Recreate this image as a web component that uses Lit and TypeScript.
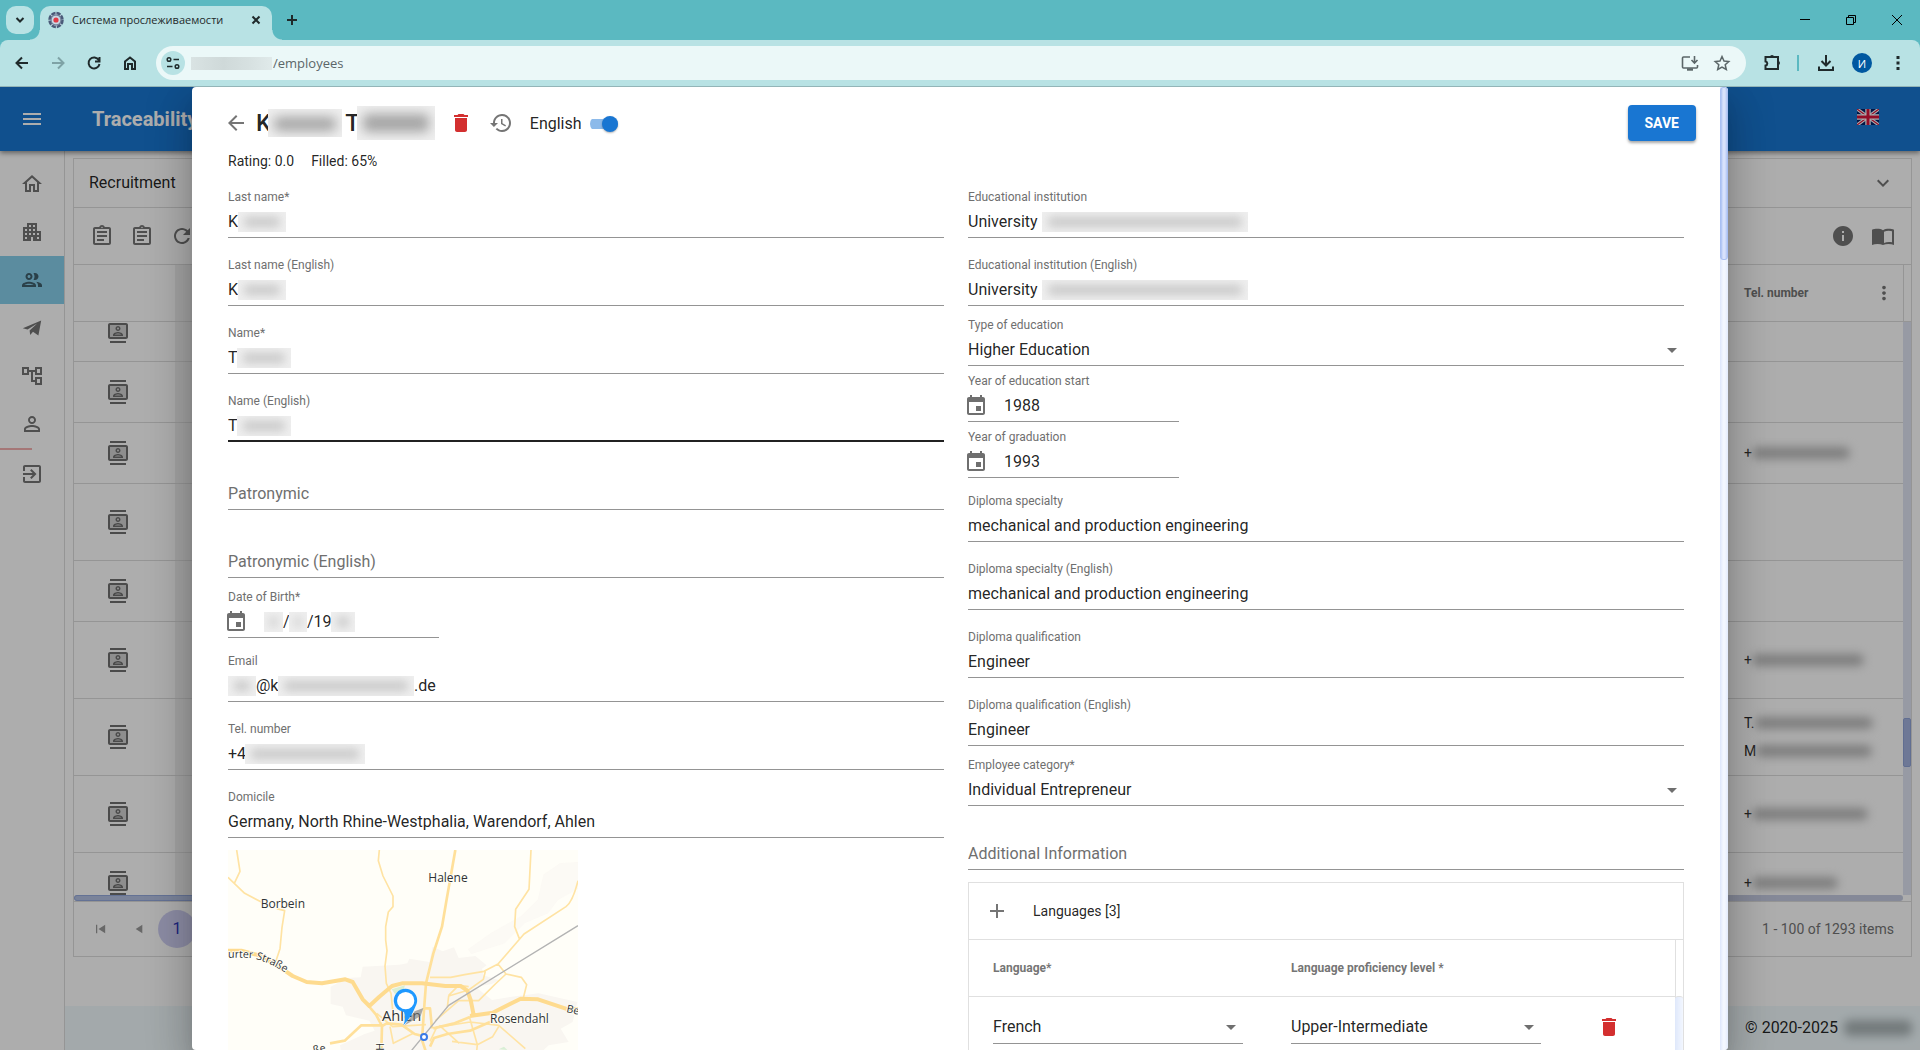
import { LitElement, html, css, svg, nothing } from "lit";
import { customElement, property } from "lit/decorators.js";

const ICONS: Record<string, string> = {
  home: "M12 5.69l5 4.5V18h-2v-6H9v6H7v-7.81l5-4.5M12 3L2 12h3v8h6v-6h2v6h6v-8h3L12 3z",
  apartment:
    "M17 11V3H7v4H3v14h8v-4h2v4h8V11h-4zM7 19H5v-2h2v2zm0-4H5v-2h2v2zm0-4H5V9h2v2zm4 4H9v-2h2v2zm0-4H9V9h2v2zm0-4H9V5h2v2zm4 8h-2v-2h2v2zm0-4h-2V9h2v2zm0-4h-2V5h2v2zm4 12h-2v-2h2v2zm0-4h-2v-2h2v2z",
  group:
    "M9 13.75c-2.34 0-7 1.17-7 3.5V19h14v-1.75c0-2.33-4.66-3.5-7-3.5zM4.34 17c.84-.58 2.87-1.25 4.66-1.25s3.82.67 4.66 1.25H4.34zM9 12c1.93 0 3.5-1.57 3.5-3.5S10.93 5 9 5 5.5 6.57 5.5 8.5 7.07 12 9 12zm0-5c.83 0 1.5.67 1.5 1.5S9.83 10 9 10s-1.5-.67-1.5-1.5S8.17 7 9 7zm7.04 6.81c1.16.84 1.96 1.96 1.96 3.44V19h4v-1.75c0-2.02-3.5-3.17-5.96-3.44zM15 12c1.93 0 3.5-1.57 3.5-3.5S16.93 5 15 5c-.54 0-1.04.13-1.5.35.63.89 1 1.98 1 3.15s-.37 2.26-1 3.15c.46.22.96.35 1.5.35z",
  plane: "M2.8 12.2L21.2 4.4 18.4 19.6 13 15.8 10.2 18.9 9.6 14.6 17.2 7.6 7.6 13.6z",
  tree: "M22 11V3h-7v3H9V3H2v8h7V8h2v10h4v3h7v-8h-7v3h-2V8h2v3h7zM7 9H4V5h3v4zm10 6h3v4h-3v-4zm0-10h3v4h-3V5z",
  person:
    "M12 5.9c1.16 0 2.1.94 2.1 2.1s-.94 2.1-2.1 2.1S9.9 9.16 9.9 8s.94-2.1 2.1-2.1m0 9c2.97 0 6.1 1.46 6.1 2.1v1.1H5.9V17c0-.64 3.13-2.1 6.1-2.1M12 4C9.79 4 8 5.79 8 8s1.79 4 4 4 4-1.79 4-4-1.79-4-4-4zm0 9c-2.67 0-8 1.34-8 4v3h16v-3c0-2.66-5.33-4-8-4z",
  exit: "M10.09 15.59L11.5 17l5-5-5-5-1.41 1.41L12.67 11H3v2h9.67l-2.58 2.59zM19 3H5c-1.11 0-2 .9-2 2v4h2V5h14v14H5v-4H3v4c0 1.1.89 2 2 2h14c1.1 0 2-.9 2-2V5c0-1.1-.9-2-2-2z",
  assignment:
    "M7 15h7v2H7zm0-4h10v2H7zm0-4h10v2H7zM19 3h-4.18C14.4 1.84 13.3 1 12 1s-2.4.84-2.82 2H5c-1.1 0-2 .9-2 2v14c0 1.1.9 2 2 2h14c1.1 0 2-.9 2-2V5c0-1.1-.9-2-2-2zm-7-.25c.41 0 .75.34.75.75s-.34.75-.75.75-.75-.34-.75-.75.34-.75.75-.75zM19 19H5V5h14v14z",
  refresh:
    "M17.65 6.35C16.2 4.9 14.21 4 12 4c-4.42 0-7.99 3.58-7.99 8s3.57 8 7.99 8c3.73 0 6.84-2.55 7.73-6h-2.08c-.82 2.33-3.04 4-5.65 4-3.31 0-6-2.69-6-6s2.69-6 6-6c1.66 0 3.14.69 4.22 1.78L13 11h7V4l-2.35 2.35z",
  contacts:
    "M20 4H4c-1.1 0-2 .9-2 2v12c0 1.1.9 2 2 2h16c1.1 0 2-.9 2-2V6c0-1.1-.9-2-2-2zm0 14H4V6h16v12zM4 0h16v2H4zm0 22h16v2H4zm8-10c1.38 0 2.5-1.12 2.5-2.5S13.38 7 12 7 9.5 8.12 9.5 9.5 10.62 12 12 12zm0-3.5c.55 0 1 .45 1 1s-.45 1-1 1-1-.45-1-1 .45-1 1-1zm5 7.49C17 13.9 13.69 13 12 13s-5 .9-5 2.99V17h10v-1.01zm-8.19-.49c.61-.52 2.03-1 3.19-1 1.17 0 2.59.48 3.2 1H8.81z",
  info: "M12 2C6.48 2 2 6.48 2 12s4.48 10 10 10 10-4.48 10-10S17.52 2 12 2zm1 15h-2v-6h2v6zm0-8h-2V7h2v2z",
  book: "M1 5.8C3.8 4.6 9 4.300 12 6.200C15 4.300 20.200 4.600 23 5.800V21C19.800 19.600 15.200 19.500 12 21C8.800 19.500 4.200 19.600 1 21zM21 18.300V7.200C18.500 6.300 15.500 6.600 13 7.700V18.900C15.500 17.900 18.500 17.700 21 18.300z",
  del: "M6 19c0 1.1.9 2 2 2h8c1.1 0 2-.9 2-2V7H6v12zM19 4h-3.5l-1-1h-5l-1 1H5v2h14V4z",
  history:
    "M13 3c-4.97 0-9 4.03-9 9H1l3.89 3.89.07.14L9 12H6c0-3.87 3.13-7 7-7s7 3.13 7 7-3.13 7-7 7c-1.93 0-3.68-.79-4.94-2.06l-1.42 1.42C8.27 19.99 10.51 21 13 21c4.97 0 9-4.03 9-9s-4.03-9-9-9zm-1 5v5l4.28 2.54.72-1.21-3.5-2.08V8H12z",
  event:
    "M17 12h-5v5h5v-5zM16 1v2H8V1H6v2H5c-1.11 0-1.99.9-1.99 2L3 19c0 1.1.89 2 2 2h14c1.1 0 2-.9 2-2V5c0-1.1-.9-2-2-2h-1V1h-2zm3 18H5V8h14v11z",
  back: "M20 11H7.83l5.59-5.59L12 4l-8 8 8 8 1.41-1.41L7.83 13H20v-2z",
  add: "M19 13h-6v6h-2v-6H5v-2h6V5h2v6h6v2z",
  menu: "M3 18h18v-2H3v2zm0-5h18v-2H3v2zm0-7v2h18V6H3z",
  expand: "M16.59 8.59L12 13.170 7.410 8.590 6 10l6 6 6-6z",
  more: "M12 8c1.1 0 2-.9 2-2s-.9-2-2-2-2 .9-2 2 .9 2 2 2zm0 2c-1.1 0-2 .9-2 2s.9 2 2 2 2-.9 2-2-.9-2-2-2zm0 6c-1.1 0-2 .9-2 2s.9 2 2 2 2-.9 2-2-.9-2-2-2z",
  caret: "M7 10l5 5 5-5z",
  first: "M6 7h1.500v10H6zM17 7v10L9 12z",
  prev: "M16 7v10L8 12z",
};

const icon = (name: string, size = 24) => html`
  <svg width=${size} height=${size} viewBox="0 0 24 24" fill="currentColor" fill-rule="evenodd" aria-hidden="true">
    <path d=${ICONS[name]}></path>
  </svg>`;

const stroke = (body: unknown, size = 20) => html`
  <svg width=${size} height=${size} viewBox="0 0 20 20" fill="none" stroke="currentColor" stroke-width="2" aria-hidden="true">
    ${body}
  </svg>`;

const base = css`
  *, *::before, *::after { box-sizing: border-box; }
  button, input, select { font: inherit; color: inherit; margin: 0; }
  button { border: 0; background: none; padding: 0; cursor: pointer; display: flex; align-items: center; justify-content: center; }
  svg { display: block; flex: none; }
`;

const smudgeStyles = css`
  .smudge {
    display: block;
    flex: none;
    align-self: center;
    height: 20px;
    overflow: hidden;
    background: #efefef;
  }
  .smudge::before {
    content: "";
    display: block;
    height: 10px;
    margin: 5px 6px;
    border-radius: 4px;
    background: #c8c8c8;
    filter: blur(5px);
  }
`;

/* ---------- Browser frame ---------- */

@customElement("browser-frame")
export class BrowserFrame extends LitElement {
  static styles = [base, css`
    :host { display: block; flex: none; font-family: "Open Sans", "Noto Sans", sans-serif; color: #1f2a2b; background: #5bb9c1; }
    .strip { display: flex; align-items: flex-end; height: 40px; padding-left: 6px; }
    .search { width: 28px; height: 28px; border-radius: 10px; background: #b8e2e4; margin: 0 6px 6px 0; }
    .tab { position: relative; display: flex; align-items: center; width: 232px; height: 34px; padding: 0 6px 6px 8px; border-radius: 10px 10px 0 0; background: #b8e2e4; }
    .tab::before, .tab::after { content: ""; position: absolute; bottom: 0; width: 10px; height: 10px; }
    .tab::before { left: -10px; background: radial-gradient(circle at 0 0, transparent 9px, #b8e2e4 10px); }
    .tab::after { right: -10px; background: radial-gradient(circle at 100% 0, transparent 9px, #b8e2e4 10px); }
    .title { flex: 1; margin-left: 8px; font-size: 11px; line-height: 16px; white-space: nowrap; }
    .close { width: 20px; height: 20px; }
    .plus { width: 28px; height: 28px; margin: 0 auto 6px 6px; }
    .window { display: flex; height: 40px; color: #000; }
    .window button { width: 46px; }
    .bar { display: flex; align-items: center; height: 47px; padding: 0 8px; background: #b8e2e4; border-radius: 8px 8px 0 0; border-bottom: 1px solid #93b5b8; }
    .nav { width: 28px; height: 28px; margin-right: 8px; }
    .dim { color: #7fa3a6; }
    .omni { flex: 1; display: flex; align-items: center; height: 34px; margin: 0 4px; padding: 0 12px 0 5px; border-radius: 17px; background: #ebf8f8; color: #5b6668; }
    .site { width: 24px; height: 24px; border-radius: 12px; background: #b8e2e4; color: #1f2a2b; margin-right: 6px; }
    .host { width: 81px; height: 13px; background: linear-gradient(90deg, #d9e3e3, #cfd9d9 40%, #d6e0e0 70%, #e0eaea); }
    .url { flex: 1; min-width: 0; border: 0; padding: 0 0 0 1px; background: none; font-size: 13px; line-height: 20px; outline: none; }
    .omni .act { width: 24px; height: 24px; margin-left: 8px; }
    .tool { width: 28px; height: 28px; margin-left: 8px; }
    .sep { width: 2px; height: 16px; margin: 0 -1px 0 11px; background: #5bb9c1; }
    .tool.dl { margin-left: 14px; }
    .avatar { width: 20px; height: 20px; border-radius: 10px; background: #0058a0; color: #fff; font-size: 11px; margin: 0 4px 0 12px; }
  `];

  render() {
    return html`
      <div class="strip">
        <button class="search" aria-label="Search tabs">${stroke(svg`<path d="M6.500 8l3.500 3.500L13.500 8"></path>`)}</button>
        <div class="tab">
          <svg width="16" height="18" viewBox="0 0 16 18" aria-hidden="true">
            <ellipse cx="8" cy="9" rx="6.500" ry="7" fill="#c9d8e4" stroke="#4a5a78" stroke-width="2.500" stroke-dasharray="4.300 1"></ellipse>
            <circle cx="8" cy="9" r="5" fill="none" stroke="#5a6a86"></circle>
            <circle cx="8" cy="9" r="2.600" fill="#e03a46"></circle>
          </svg>
          <span class="title">Система прослеживаемости</span>
          <button class="close" aria-label="Close tab">${stroke(svg`<path d="M6.500 6.500l7 7M13.500 6.500l-7 7"></path>`)}</button>
        </div>
        <button class="plus" aria-label="New tab">${stroke(svg`<path d="M10 5v10M5 10h10"></path>`)}</button>
        <div class="window">
          <button aria-label="Minimize">${stroke(svg`<path stroke-width="1" d="M5 9.500h10"></path>`)}</button>
          <button aria-label="Restore">${stroke(svg`<path stroke-width="1" d="M5.500 7.500h7v7h-7zM7.500 7.500v-2h7v7h-2"></path>`)}</button>
          <button aria-label="Close">${stroke(svg`<path stroke-width="1" d="M5 5l10 10M15 5L5 15"></path>`)}</button>
        </div>
      </div>
      <div class="bar">
        <button class="nav" aria-label="Back">${stroke(svg`<path d="M16 10H5M10 4.500L4.500 10l5.500 5.500"></path>`)}</button>
        <button class="nav dim" aria-label="Forward">${stroke(svg`<path d="M4 10h11M10 4.500l5.500 5.500-5.500 5.500"></path>`)}</button>
        <button class="nav" aria-label="Reload">${stroke(svg`<path d="M14.800 7A5.500 5.500 0 1 0 15.500 11M15.500 4v4.500H11"></path>`)}</button>
        <button class="nav" aria-label="Home">${stroke(svg`<path d="M5 16V8.500L10 4.500l5 4V16h-3v-5H8v5z"></path>`)}</button>
        <div class="omni">
          <button class="site" aria-label="Site information">${stroke(svg`<path stroke-width="1.500" d="M10.500 6.500H16M4 13.500h5.500"></path><circle stroke-width="1.500" cx="6" cy="6.500" r="1.800"></circle><circle stroke-width="1.500" cx="14" cy="13.500" r="1.800"></circle>`)}</button>
          <span class="host"></span>
          <input class="url" aria-label="Address" value="/employees">
          <button class="act" aria-label="Install">${stroke(svg`<path stroke-width="1.600" d="M10 4H3.500a1 1 0 0 0-1 1v9a1 1 0 0 0 1 1h13a1 1 0 0 0 1-1v-2M14.500 3v6.500M11.500 7l3 3 3-3"></path><path stroke-width="2.400" d="M7 16.500h6"></path>`)}</button>
          <button class="act" aria-label="Bookmark">${stroke(svg`<path stroke-width="1.500" d="M10 3.500l2 4.500 4.800.5-3.600 3.200 1.100 4.800L10 14l-4.300 2.500 1.100-4.800L3.200 8.500 8 8z"></path>`)}</button>
        </div>
        <button class="tool" aria-label="Extensions">${stroke(svg`<path d="M3.500 4H16v12H3.500v-3.500c2.400-.4 2.400-3.600 0-4z"></path><path stroke="none" fill="currentColor" d="M8 4a2 2 0 0 1 4 0zM16 8a2 2 0 0 1 0 4z"></path>`)}</button>
        <span class="sep"></span>
        <button class="tool dl" aria-label="Downloads">${stroke(svg`<path d="M10 2v10M5.500 8l4.500 4.500L14.500 8M3 13.500V17h14v-3.500"></path>`)}</button>
        <button class="avatar" aria-label="Profile">И</button>
        <button class="tool" aria-label="Menu">${stroke(svg`<path stroke-width="3" d="M10 3v3M10 8.500v3M10 14v3"></path>`)}</button>
      </div>`;
  }
}

/* ---------- Page behind the dialog ---------- */

interface GridRow { tall?: boolean; tel: [string, number][]; }

const ROWS: GridRow[] = [
  { tel: [] },
  { tel: [] },
  { tel: [["+", 98]] },
  { tall: true, tel: [] },
  { tel: [] },
  { tall: true, tel: [["+", 112]] },
  { tall: true, tel: [["T.", 118], ["M", 116]] },
  { tall: true, tel: [["+", 116]] },
  { tel: [["+", 86]] },
];

const MENU: [string, string][] = [
  ["home", "Home"], ["apartment", "Companies"], ["group", "Employees"], ["plane", "Messages"],
  ["tree", "Structure"], ["person", "Profile"], ["exit", "Log out"],
];

@customElement("employees-page")
export class EmployeesPage extends LitElement {
  static styles = [base, css`
    :host { display: flex; flex-direction: column; height: 100%; background: #fff; font-family: Roboto, sans-serif; color: rgba(0, 0, 0, .87); }
    .top { flex: none; display: flex; align-items: center; height: 64px; padding: 0 36px 0 16px; background: #1976d2; color: #fff; box-shadow: 0 2px 5px rgba(0, 0, 0, .45); z-index: 1; }
    .top button { width: 32px; height: 40px; }
    .brand { flex: 1; margin: 0 0 0 44px; font-size: 20px; line-height: 32px; font-weight: 700; }
    .lang { padding-bottom: 4px; }
    .body { flex: 1; display: flex; min-height: 0; }
    .side { flex: none; width: 65px; padding-top: 9px; border-right: 1px solid #dcdcdc; color: #757575; }
    .side a { display: flex; align-items: center; justify-content: center; height: 48px; color: inherit; }
    .side a.on { background: #87ceeb; color: #3f5f6c; }
    .mark { display: block; width: 32px; height: 2px; background: #f4b0b0; }
    .main { flex: 1; min-width: 0; display: flex; flex-direction: column; }
    .content { flex: 1; min-height: 0; display: flex; flex-direction: column; padding: 7px 8px 49px; }
    .panel { display: flex; align-items: center; justify-content: space-between; height: 49px; padding: 0 16px 0 15px; border: solid #dedede; border-width: 1px 1px 0; font-size: 16px; line-height: 24px; }
    .panel svg, .tools, .pager { color: #757575; }
    .grid { flex: 1; min-height: 0; display: flex; flex-direction: column; border: 1px solid #dcdcdc; }
    .tools { display: flex; align-items: center; height: 57px; padding: 0 8px; border-bottom: 1px solid #dcdcdc; }
    .tools button { width: 40px; height: 40px; }
    .fill { flex: 1; }
    .scroll { flex: 1; min-height: 0; display: flex; flex-direction: column; overflow: hidden; }
    table { width: 100%; border-collapse: separate; border-spacing: 0; table-layout: fixed; }
    .c1 { width: 101px; }
    .c3 { width: 183px; }
    .gut { width: 8px; }
    td, th { padding: 0; border-bottom: 1px solid #dcdcdc; height: 61px; font-size: 14px; line-height: 28px; text-align: left; font-weight: 400; }
    th { height: 57px; font-size: 12px; font-weight: 700; color: #757575; }
    th.gut { border-left: 1px solid #dcdcdc; }
    .tall td { height: 77px; }
    td:first-child svg { margin-left: 32px; color: #6f6f6f; background: linear-gradient(#d2d2d2, #d2d2d2) center / 18px 14px no-repeat; }
    .c2 { background: #f0f0f0; }
    .tel { padding-left: 24px; }
    .head { display: flex; align-items: center; justify-content: space-between; padding-right: 8px; }
    .line { display: flex; align-items: center; }
    .blot { height: 12px; background: #bababa; filter: blur(5px); border-radius: 6px; }
    .rows { flex: 1; min-height: 0; display: flex; overflow: hidden; }
    .rows table { flex: 1; width: auto; margin-top: -21px; align-self: flex-start; }
    .vbar { width: 8px; flex: none; display: flex; flex-direction: column; background: #dfe3f2; }
    .vbar i { margin-top: 396px; height: 49px; border-radius: 2px; background: #a3b2de; border: 1px solid #8fa3d6; }
    .hbar { flex: none; display: flex; height: 6px; margin-right: 8px; background: #c4cbe0; border-radius: 3px; }
    .hbar i { width: 40%; background: #b4c2e4; border: 1px solid #94a8dc; border-radius: 3px; }
    .pager { flex: none; display: flex; align-items: center; height: 55px; padding: 0 17px 0 8px; border-top: 1px solid #dcdcdc; font-size: 14px; line-height: 20px; }
    .pager button { width: 38px; height: 38px; color: #9a9a9a; }
    .pager .cur { border-radius: 19px; background: #cfcff2; color: #2c35b8; font-size: 16px; }
    .foot { flex: none; display: flex; align-items: center; justify-content: flex-end; height: 44px; padding: 0 8px; background: #f0fafd; font-size: 16px; line-height: 24px; gap: 6px; }
    .foot .blot { width: 68px; height: 16px; background: #aab4b6; }
  `];

  render() {
    return html`
      <header class="top">
        <button aria-label="Menu">${icon("menu")}</button>
        <h1 class="brand">Traceability</h1>
        <button class="lang" aria-label="English">
          <svg width="22" height="16" viewBox="0 0 22 16" aria-hidden="true">
            <rect width="22" height="16" fill="#012169"></rect>
            <path d="M0 0l22 16M22 0L0 16" stroke="#fff" stroke-width="3.400"></path>
            <path d="M0 0l22 16M22 0L0 16" stroke="#d8143a" stroke-width="1.200"></path>
            <path d="M11 0v16M0 8h22" stroke="#fff" stroke-width="5.400"></path>
            <path d="M11 0v16M0 8h22" stroke="#d8143a" stroke-width="3"></path>
          </svg>
        </button>
      </header>
      <div class="body">
        <nav class="side">
          ${MENU.map(([name, label]) => html`
            ${name === "exit" ? html`<i class="mark"></i>` : nothing}
            <a href="#" class=${name === "group" ? "on" : ""} aria-label=${label}>${icon(name)}</a>`)}
        </nav>
        <div class="main">
          <div class="content">
            <div class="panel"><span>Recruitment</span>${icon("expand")}</div>
            <div class="grid">
              <div class="tools">
                <button aria-label="Report">${icon("assignment")}</button>
                <button aria-label="Form">${icon("assignment")}</button>
                <button aria-label="Refresh">${icon("refresh")}</button>
                <span class="fill"></span>
                <button aria-label="Information">${icon("info")}</button>
                <button aria-label="Manual">${icon("book")}</button>
              </div>
              <div class="scroll">
                <table>
                  <thead><tr>
                    <th class="c1"></th><th class="c2"></th>
                    <th class="c3"><div class="tel head">Tel. number ${icon("more", 22)}</div></th>
                    <th class="gut"></th>
                  </tr></thead>
                </table>
                <div class="rows">
                  <table>
                    <colgroup><col class="c1"><col><col class="c3"></colgroup>
                    <tbody>
                      ${ROWS.map((r) => html`
                        <tr class=${r.tall ? "tall" : ""}>
                          <td>${icon("contacts")}</td>
                          <td class="c2"></td>
                          <td><div class="tel">${r.tel.map(([t, w]) => html`
                            <div class="line">${t}<span class="blot" style="width:${w}px"></span></div>`)}</div></td>
                        </tr>`)}
                    </tbody>
                  </table>
                  <div class="vbar"><i></i></div>
                </div>
                <div class="hbar"><i></i></div>
              </div>
              <div class="pager">
                <button aria-label="First page">${icon("first", 20)}</button>
                <button aria-label="Previous page">${icon("prev", 20)}</button>
                <button class="cur">1</button>
                <span class="fill"></span>
                <span>1 - 100 of 1293 items</span>
              </div>
            </div>
          </div>
          <footer class="foot"><span>© 2020-2025</span><span class="blot"></span></footer>
        </div>
      </div>`;
  }
}

/* ---------- Map ---------- */

@customElement("place-map")
export class PlaceMap extends LitElement {
  static styles = [base, css`
    :host { display: block; width: 350px; height: 300px; background: #fffef6; overflow: hidden; }
    text { font-family: "Open Sans", "Noto Sans", sans-serif; fill: #2f3337; stroke: #fffef6; stroke-width: 5; paint-order: stroke; }
    .town { font-size: 36px; }
    .city { font-size: 44px; }
    .road { font-size: 32px; }
    .minor { fill: none; stroke: #ffe3a3; stroke-width: 5; stroke-linejoin: round; }
    .mid { fill: none; stroke: #ffe09a; stroke-width: 8; stroke-linejoin: round; }
    .major { fill: none; stroke: #fedb8f; stroke-width: 12; stroke-linejoin: round; }
    .rail { fill: none; stroke: #b3b3b3; stroke-width: 4; }
  `];

  render() {
    return html`
      <svg width="350" height="300" viewBox="54 60 1050 900" role="img" aria-label="Map of Ahlen">
        <rect x="54" y="60" width="1050" height="900" fill="#fffef8"></rect>
        <g fill="#f9f6f1">
          <path d="M362 470l50-26 40-2 6-32 110-6 24-4 6-14 60 10 10-46 30 14 34-12 14 32 50-6 34 28-14 10 4 20 46 14-20 12-50 8 50 40 60-10 80-10 116 26-14 60-36 20 24 40-60 10-30 28 20 82H460l-60-40-10-70 74-34 30-10-16-30-70-16-10-26-36-8z"></path>
          <path d="M1000 134l50-34 54-4v80l-60 34-30 40-70 30-60 60-100 32-10-14 70-50 90-50 50-50z" opacity=".5"></path>
        </g>
        <path d="M545 478l40-12-6 20-24 6zM866 658l16-8 10 10z" fill="#d9efd5"></path>
        <path class="minor" d="M80 60l10 64-16 34M54 142l50 48 50 26M200 236l24 6-8 50-6 64-12 36M508 60l-3 32 14 46 30 60v32l-14 16-8 44v40l4 32-6 46 4 52 14 30 6 60M963 60l-6 118-40 60-3 52 14 36M1104 152c-10 40-20 66-36 78l-126 82-78 90-42 22-58 10-42 8h-62M864 402l24 30 46 10 16 22-10 40M826 424l-6 24-44 32-60 18-4 34M888 432l-32 30-50 50h-60l-70 60M776 470l-30-4-30 30M660 634l20-42 100-16 86 10 80 70M866 590l-18 30-46 24-76-10M778 560l24 84-4 40M500 550l48 40 100-6M540 590l10 50 60-30M688 586l60 54"></path>
        <path class="mid" d="M736 60l-26 148-14 82-26 80-22 90-6 80-6 90 20 60M640 535h20l6 60M360 640l44-8 50-46h66l10-6 44 4 40 28 40 10M670 595l60-14 50-20M476 528l22 26 18 34-2 72M660 650l12-26 40-12 68-10 60-26"></path>
        <path class="major" d="M54 362h40l60 16 56 34 38 26 42 18 46 4 70-12 22 8 30 52 20 20 30-28 38-32 30-8h60l70 8h46l20 14 10 28 10 50M780 558l68-10 84-42 52 2 90 30h30"></path>
        <path class="rail" d="M1104 287L716 526 606 660 440 860"></path>
        <path id="street" d="M54 383q40 0 74 2 50 12 100 44" fill="none"></path>
        <text class="road"><textPath href="#street">urter Straße</textPath></text>
        <text class="town" x="152" y="234">Borbein</text>
        <text class="town" x="655" y="156">Halene</text>
        <text class="town" x="840" y="580">Rosendahl</text>
        <text class="city" x="516" y="574">Ahlen</text>
        <text class="road" x="1068" y="546" transform="rotate(12 1068 546)">Be</text>
        <text class="road" x="312" y="672" transform="rotate(-14 312 672)">ße</text>
        <text class="road" x="522" y="662" transform="rotate(-90 522 662)">H</text>
        <path d="M584 586l30-42 26-10-8 24z" fill="#777" opacity=".6"></path>
        <path d="M580 586q8-20 2-40a35 35 0 1 1 34-16q-12 32-36 56z" fill="#1e98ff"></path>
        <circle cx="587" cy="512" r="26" fill="#fff"></circle>
        <circle cx="642" cy="621" r="9" fill="#fff" stroke="#3a7be8" stroke-width="6"></circle>
      </svg>`;
  }
}

/* ---------- Form field ---------- */

/* A string is an editable piece of the value with its width; a bare number is a concealed stretch. */
type Part = [string, number] | number;

@customElement("form-field")
export class FormField extends LitElement {
  @property() label = "";
  @property() kind: "text" | "select" | "date" = "text";
  @property() value = "";
  @property({ attribute: false }) parts: Part[] = [];
  @property({ type: Boolean, reflect: true }) active = false;
  @property({ type: Boolean, reflect: true }) bare = false;

  static styles = [base, smudgeStyles, css`
    :host { display: block; font-family: Roboto, sans-serif; color: rgba(0, 0, 0, .87); }
    .field { height: 52px; padding: 3px 0; border-bottom: 1px solid #949494; }
    .field.date { width: 211px; }
    :host([active]) .field { border-bottom: 2px solid #212121; padding-bottom: 2px; }
    label { display: block; height: 16px; margin-bottom: 5px; font-size: 12px; line-height: 16px; color: #6f6f6f; }
    .value { display: flex; height: 24px; font-size: 16px; line-height: 24px; }
    input, select { flex: 1; min-width: 0; width: 100%; height: 24px; border: 0; padding: 0; background: none; outline: none; appearance: none; border-radius: 0; }
    input.part { flex: none; }
    input::placeholder { color: #6f6f6f; opacity: 1; }
    .arrow { width: 24px; margin: 0 0 0 -24px; pointer-events: none; color: #6f6f6f; }
    .pick { width: 24px; height: 24px; margin: 0 16px 0 -4px; color: #6f6f6f; }
    :host([bare]) .field { height: 29px; padding: 0; }
  `];

  private control() {
    if (this.kind === "select")
      return html`<select id="c" aria-label=${this.bare ? this.label : nothing}><option>${this.value}</option></select><span class="arrow">${icon("caret")}</span>`;
    if (this.parts.length) {
      const first = this.parts.findIndex((p) => typeof p !== "number");
      return this.parts.map((p, i) => typeof p === "number"
        ? html`<span class="smudge" style="width:${p}px"></span>`
        : html`<input class="part" id=${i === first ? "c" : nothing} aria-label=${this.label} .value=${p[0]} style="width:${p[1]}px">`);
    }
    if (!this.value) return html`<input id="c" placeholder=${this.label} aria-label=${this.label}>`;
    return html`<input id="c" .value=${this.value}>`;
  }

  render() {
    const empty = !this.value && !this.parts.length;
    return html`
      <div class="field ${this.kind}">
        ${this.bare ? nothing : html`<label for="c">${empty ? "" : this.label}</label>`}
        <div class="value">
          ${this.kind === "date" ? html`<button class="pick" aria-label="Open calendar">${icon("event")}</button>` : nothing}
          ${this.control()}
        </div>
      </div>`;
  }
}

/* ---------- Employee dialog ---------- */

@customElement("employee-dialog")
export class EmployeeDialog extends LitElement {
  static styles = [base, smudgeStyles, css`
    :host { display: flex; width: 80%; height: 100%; border-radius: 4px; overflow: hidden; background: #fff; font-family: Roboto, sans-serif; color: rgba(0, 0, 0, .87); box-shadow: 0 11px 15px -7px rgba(0, 0, 0, .2), 0 24px 38px 3px rgba(0, 0, 0, .14), 0 9px 46px 8px rgba(0, 0, 0, .12); }
    .pane { flex: 1; min-width: 0; overflow: hidden; padding: 18px 36px 0; }
    .bar { flex: none; width: 8px; background: linear-gradient(90deg, #dde6fb, #f3f7ff 40%, #f3f7ff 60%, #e2eafc); }
    .thumb { height: 18%; border-radius: 3px; background: linear-gradient(90deg, #a9c0f2, #d8e2fb 35%, #d8e2fb 65%, #b0c5f4); border: 1px solid #a9c0f2; }
    .head { display: flex; align-items: center; height: 36px; margin: 0 -12px; }
    .ib { width: 40px; height: 36px; color: #757575; }
    .red { color: #d32f2f; }
    h2 { display: flex; align-items: center; margin: 0 6px 0 0; font-size: 24px; line-height: 32px; font-weight: 500; }
    h2 .smudge { height: 28px; margin: 0 3px 0 -3px; }
    h2 .smudge::before { height: 14px; margin: 8px 6px; background: #a4a4a4; filter: blur(6px); }
    h2 .smudge:last-child { height: 34px; margin-right: 0; }
    h2 .smudge:last-child::before { height: 18px; }
    .switch { display: flex; align-items: center; margin-left: 9px; padding-top: 1px; font-size: 16px; line-height: 24px; gap: 8px; }
    .switch input { appearance: none; display: flex; align-items: center; justify-content: flex-end; width: 28px; height: 16px; background: linear-gradient(#8cbaea, #8cbaea) center / 28px 10px no-repeat; border-radius: 8px; }
    .switch input::before { content: ""; width: 16px; height: 16px; border-radius: 8px; background: #1976d2; box-shadow: 0 1px 2px rgba(0, 0, 0, .3); }
    .save { height: 36px; padding: 0 17px; margin-left: auto; border-radius: 4px; background: #1976d2; color: #fff; font-size: 14px; line-height: 20px; font-weight: 700; box-shadow: 0 2px 3px rgba(0, 0, 0, .35); }
    .meta { display: flex; gap: 17px; height: 19px; margin-top: 10px; font-size: 14px; line-height: 20px; }
    .cols { display: grid; grid-template-columns: 1fr 1fr; gap: 24px; align-items: start; }
    form-field { margin-top: 16px; }
    .m12 { margin-top: 12px; }
    .m8 { margin-top: 8px; }
    .m4 { margin-top: 4px; }
    place-map { margin-top: 12px; }
    .langs { margin-top: 12px; border: 1px solid #e0e0e0; font-size: 14px; line-height: 20px; }
    .add { display: flex; align-items: center; height: 56px; padding-left: 8px; }
    .add span { margin-left: 16px; }
    .wrap { display: flex; border-top: 1px solid #e0e0e0; }
    table { flex: 1; border-collapse: separate; border-spacing: 0; table-layout: fixed; width: 100%; }
    th { height: 57px; padding: 0 24px; border-bottom: 1px solid #e0e0e0; text-align: left; font-size: 12px; font-weight: 700; color: #757575; }
    td { height: 61px; padding: 0 24px; border-bottom: 1px solid #e0e0e0; }
    td form-field { margin: 4px 0 0; }
    td:last-child { padding: 0; }
    td .ib { margin-left: 24px; }
    .c3 { width: 110px; }
    .lbar { width: 8px; border-left: 1px solid #e0e0e0; display: flex; flex-direction: column; }
    .lbar i { flex: 1; margin: 56px 0 0 -1px; border-top: 1px solid #e0e0e0; border-radius: 3px 3px 0 0; background: linear-gradient(90deg, #dfe8fb, #f3f7ff); }
  `];

  render() {
    return html`
      <div class="pane">
        <div class="head">
          <button class="ib" aria-label="Back">${icon("back")}</button>
          <h2>K<span class="smudge" style="width:74px"></span>T<span class="smudge" style="width:78px"></span></h2>
          <button class="ib red" aria-label="Delete">${icon("del")}</button>
          <button class="ib" aria-label="History">${icon("history")}</button>
          <label class="switch">English <input type="checkbox" role="switch" checked></label>
          <button class="save">SAVE</button>
        </div>
        <div class="meta"><span>Rating: 0.0</span><span>Filled: 65%</span></div>
        <div class="cols">
          <div>
            <form-field label="Last name*" .parts=${[["K", 10], 48]}></form-field>
            <form-field label="Last name (English)" .parts=${[["K", 10], 48]}></form-field>
            <form-field label="Name*" .parts=${[["T", 9], 54]}></form-field>
            <form-field label="Name (English)" active .parts=${[["T", 9], 54]}></form-field>
            <form-field label="Patronymic"></form-field>
            <form-field label="Patronymic (English)"></form-field>
            <form-field class="m8" kind="date" label="Date of Birth*" .parts=${[19, ["/", 6], 18, ["/19", 24], 24]}></form-field>
            <form-field class="m12" label="Email" .parts=${[28, ["@k", 22], 136, [".de", 60]]}></form-field>
            <form-field label="Tel. number" .parts=${[["+4", 17], 120]}></form-field>
            <form-field label="Domicile" value="Germany, North Rhine-Westphalia, Warendorf, Ahlen"></form-field>
            <place-map></place-map>
          </div>
          <div>
            <form-field label="Educational institution" .parts=${[["University", 74], 206]}></form-field>
            <form-field label="Educational institution (English)" .parts=${[["University", 74], 206]}></form-field>
            <form-field class="m8" kind="select" label="Type of education" value="Higher Education"></form-field>
            <form-field class="m4" kind="date" label="Year of education start" value="1988"></form-field>
            <form-field class="m4" kind="date" label="Year of graduation" value="1993"></form-field>
            <form-field class="m12" label="Diploma specialty" value="mechanical and production engineering"></form-field>
            <form-field label="Diploma specialty (English)" value="mechanical and production engineering"></form-field>
            <form-field label="Diploma qualification" value="Engineer"></form-field>
            <form-field label="Diploma qualification (English)" value="Engineer"></form-field>
            <form-field class="m8" kind="select" label="Employee category*" value="Individual Entrepreneur"></form-field>
            <form-field class="m12" label="Additional Information"></form-field>
            <section class="langs">
              <div class="add"><button class="ib" aria-label="Add language">${icon("add")}</button><span>Languages [3]</span></div>
              <div class="wrap">
                <table>
                  <thead><tr><th>Language*</th><th>Language proficiency level *</th><th class="c3"></th></tr></thead>
                  <tbody><tr>
                    <td><form-field bare kind="select" label="Language" value="French"></form-field></td>
                    <td><form-field bare kind="select" label="Language proficiency level" value="Upper-Intermediate"></form-field></td>
                    <td><button class="ib red" aria-label="Delete language">${icon("del")}</button></td>
                  </tr></tbody>
                </table>
                <div class="lbar"><i></i></div>
              </div>
            </section>
          </div>
        </div>
      </div>
      <div class="bar"><div class="thumb"></div></div>`;
  }
}

@customElement("app-root")
export class AppRoot extends LitElement {
  static styles = css`
    :host { display: flex; flex-direction: column; height: 100vh; }
    .page { flex: 1; min-height: 0; position: relative; overflow: hidden; }
    .backdrop { position: absolute; inset: 0; z-index: 2; display: flex; justify-content: center; background: rgba(0, 0, 0, .32); }
  `;

  render() {
    return html`
      <browser-frame></browser-frame>
      <div class="page">
        <employees-page></employees-page>
        <div class="backdrop"><employee-dialog role="dialog" aria-label="Employee"></employee-dialog></div>
      </div>`;
  }
}
